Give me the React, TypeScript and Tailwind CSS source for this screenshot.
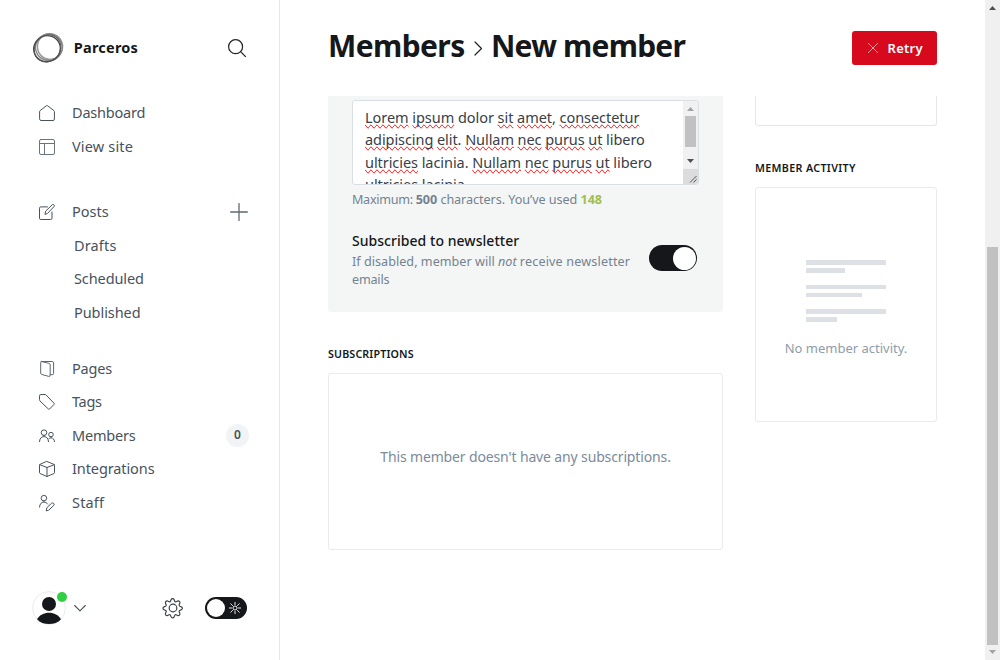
import type { ReactNode } from "react";

function Icon({ children }: { children: ReactNode }) {
  return (
    <svg viewBox="0 0 16 16" className="h-4 w-4 shrink-0 overflow-visible" fill="none" stroke="#48525c" strokeWidth="1" strokeLinecap="round" strokeLinejoin="round">
      {children}
    </svg>
  );
}

const icons = {
  home: <path d="M.6 6.6q0-.6.5-1L7.3.8q.7-.5 1.4 0l6.2 4.8q.5.4.5 1v7.500q0 1.400-1.400 1.400H2Q.6 15.500.6 14.100z" />,
  site: <path stroke="#6b747d" d="M2 .5h12q1.500 0 1.500 1.500v12q0 1.500-1.500 1.500H2Q.5 15.500.5 14V2Q.5.5 2 .5zM.5 4.500h15M5.500 4.500v11" />,
  posts: <path d="M8.500 2.900H1.800Q.5 2.900.5 4.200v9.900q0 1.400 1.300 1.400h9.900q1.300 0 1.300-1.400V8M6 10l.7-2.900L13.300.7q.8-.6 1.600.1.900.9.2 1.700L8.700 9.200z" />,
  pages: <path stroke="#5c6670" d="M2.300.5h10.900q1.400 0 1.400 1.300v10.600q0 1.300-1.400 1.300h-2.100M2.300.5 9.900 2.300q1.300.4 1.300 1.700v10.300q0 1.500-1.400 1.100L2.800 13.500q-1.100-.3-1.100-1.400V1.500q0-.8.600-1z" />,
  tags: <path d="M.5 1.800Q.5.500 1.800.500L6.700.600 15 9.200q.6.600 0 1.200L10.600 15q-.6.600-1.200 0L1 7Q.5 6.500.5 5.900z" />,
  members: <path d="M5 7.500a2.800 2.800 0 1 0 0-5.600 2.800 2.800 0 0 0 0 5.600zM.5 13.600c.2-3.200 1.800-5 4.500-5s4.300 1.800 4.500 5M12 8.900a2.300 2.300 0 1 0 0-4.600 2.300 2.300 0 0 0 0 4.600zM9.600 10.900c.6-.7 1.400-1 2.400-1 2.100 0 3.300 1.400 3.500 3.700" />,
  box: <path d="M8 .5l7 2.900q.5.300.5.800v7.500q0 .6-.5.800L8 15.500l-7-3Q.5 12.200.5 11.700V4.200q0-.5.5-.8zM.7 3.700 8 6.500l7.300-2.800M8 6.500v9" />,
  staff: <path d="M4.900 6a2.800 2.800 0 1 0 0-5.600 2.800 2.800 0 0 0 0 5.600zM.5 12.100C.7 9 2.300 7.100 4.900 7.100c1.700 0 2.900.7 3.700 1.900M7.300 15.500l.5-2.700 4.700-4.500q1.200-.8 2.200.1.900 1 .1 2L9.900 15z" />,
};

function NavItem({ icon, label, track, children }: { icon: ReactNode; label: string; track: string; children?: ReactNode }) {
  return (
    <a className="flex h-[33.5px] items-center pl-[39px] pr-[31px]">
      <Icon>{icon}</Icon>
      <span className={`ml-[17px] flex-1 pb-0.5 ${track}`}>{label}</span>
      {children}
    </a>
  );
}

function Sidebar() {
  return (
    <aside className="flex h-full w-[280px] shrink-0 flex-col border-r border-[#e5e8eb] text-[14.5px] leading-5 text-[#48525c]">
      <header className="flex items-center pl-8 pr-[33px] pt-8">
        <svg viewBox="0 0 32 32" className="h-8 w-8" fill="none">
          <ellipse cx="18" cy="14.600" rx="12.600" ry="12.800" stroke="#999" strokeWidth="1.500" />
          <ellipse cx="16.800" cy="15.300" rx="13.400" ry="13.200" stroke="#888" strokeWidth="1.400" transform="rotate(20 16.800 15.300)" />
          <ellipse cx="15" cy="16.700" rx="13.400" ry="12.900" stroke="#444" strokeWidth="1.300" transform="rotate(-25 15 16.700)" />
          <ellipse cx="15.600" cy="16.400" rx="14.200" ry="12.600" stroke="#555" strokeWidth="1" transform="rotate(-50 15.600 16.400)" />
        </svg>
        <span className="ml-[9.800px] flex-1 pb-0.5 text-[14.5px] font-bold tracking-[0.22px] text-[#15171a]">Parceros</span>
        <svg viewBox="0 0 18 18" className="h-[18px] w-[18px]" fill="none" stroke="#222" strokeWidth="1.200" strokeLinecap="round">
          <circle cx="7.600" cy="7.700" r="7" />
          <path d="M12.600 12.700l5 5" />
        </svg>
      </header>

      <nav className="mt-[32.250px] flex flex-col">
        <NavItem icon={icons.home} label="Dashboard" track="tracking-[-0.2px]" />
        <NavItem icon={icons.site} label="View site" track="tracking-[0.16px]" />
      </nav>
      <nav className="mt-8 flex flex-col">
        <NavItem icon={icons.posts} label="Posts" track="tracking-[0.02px]">
          <svg viewBox="0 0 18 18" className="h-[18px] w-[18px]" fill="none" stroke="#5f6972" strokeWidth="1.300" strokeLinecap="round">
            <path d="M9 .6v16.800M.6 9h16.800" />
          </svg>
        </NavItem>
        <a className="flex h-[33.5px] items-center pb-0.5 pl-[74px] tracking-[0.15px]">Drafts</a>
        <a className="flex h-[33.5px] items-center pb-0.5 pl-[74px] tracking-[-0.1px]">Scheduled</a>
        <a className="flex h-[33.5px] items-center pb-0.5 pl-[74px] tracking-[-0.06px]">Published</a>
      </nav>
      <nav className="mt-[22.500px] flex flex-col">
        <NavItem icon={icons.pages} label="Pages" track="tracking-[-0.18px]" />
        <NavItem icon={icons.tags} label="Tags" track="tracking-[-0.3px]" />
        <NavItem icon={icons.members} label="Members" track="tracking-[-0.2px]">
          <span className="-mr-[1px] mb-px flex h-[23px] w-[23px] items-center justify-center rounded-full bg-[#f1f3f5] text-xs font-semibold">0</span>
        </NavItem>
        <NavItem icon={icons.box} label="Integrations" track="tracking-[-0.1px]" />
        <NavItem icon={icons.staff} label="Staff" track="tracking-[0.17px]" />
      </nav>

      <footer className="mb-[35px] mt-auto flex items-center pl-8 pr-8">
        <svg viewBox="0 0 54 34" className="h-[34px] w-[54px]" fill="none">
          <circle cx="17" cy="17" r="16.400" stroke="#e5e8eb" strokeWidth=".900" />
          <circle cx="17" cy="13" r="7" fill="#15171a" />
          <path d="M5 28.200C7.500 24 12 21.800 17 21.800s9.500 2.200 12 6.400c-3 3.400-7.200 4.800-12 4.800s-9-1.400-12-4.800z" fill="#15171a" />
          <circle cx="30" cy="6" r="5" fill="#30cf43" />
          <path d="M42.700 14.500l5.300 5.300 5.300-5.300" stroke="#48525c" strokeWidth="1.100" strokeLinecap="round" strokeLinejoin="round" />
        </svg>
        <svg viewBox="0 0 24 24" className="ml-auto h-5 w-5 overflow-visible" fill="none" stroke="#394047" strokeWidth="1.400" strokeLinejoin="round">
          <path d="M13.300 1.900l.7 1.800c.2.700 1 1 1.700.8l1.900-.8c1.600-.6 3.300 1 2.600 2.600l-.8 1.900c-.3.700.1 1.400.8 1.700l1.800.7c1.600.6 1.600 2.900 0 3.500l-1.800.7c-.7.200-1 1-.8 1.700l.8 1.900c.7 1.500-1 3.200-2.600 2.500l-1.900-.8c-.7-.2-1.500.1-1.700.8l-.7 1.800c-.6 1.600-2.900 1.600-3.500 0l-.7-1.800c-.2-.700-1-1-1.700-.8l-1.900.8c-1.500.7-3.200-1-2.500-2.500l.8-1.900c.2-.700-.1-1.500-.8-1.700l-1.800-.7c-1.600-.6-1.600-2.900 0-3.500l1.800-.7c.7-.3 1-1 .8-1.700l-.8-1.900c-.7-1.600 1-3.200 2.500-2.600l1.900.8c.7.2 1.500-.1 1.700-.8l.7-1.800c.6-1.600 2.900-1.600 3.500 0z" />
          <circle cx="12" cy="12" r="4.600" />
        </svg>
        <span className="ml-[22px] flex h-[22px] w-[42px] items-center rounded-full bg-[#15171a] px-0.5">
          <span className="h-[18px] w-[18px] rounded-full bg-white" />
          <svg viewBox="0 0 12 12" className="ml-1 h-3 w-3" fill="none" stroke="#fff" strokeWidth=".900">
            <circle cx="6" cy="6" r="2" />
            <path d="M6 0v3M6 9v3M0 6h3M9 6h3M1.500 1.500l2.300 2.300M8.200 8.200l2.300 2.300M10.500 1.500 8.200 3.800M3.800 8.200l-2.300 2.300" />
          </svg>
        </span>
      </footer>
    </aside>
  );
}

function Bad({ children }: { children: ReactNode }) {
  return <span className="[text-decoration-line:spelling-error]">{children}</span>;
}

function NoteField() {
  return (
    <div className="flex h-[85px] w-[347px] overflow-hidden rounded-[3px] border border-[#dadfe3] bg-white">
      <div className="flex-1 whitespace-nowrap pl-[12px] pt-[4.500px] text-[14.5px] leading-[22.500px] text-[#394047]">
        <p className="tracking-[-0.050px]"><Bad>Lorem</Bad> <Bad>ipsum</Bad> dolor <Bad>sit</Bad> <Bad>amet</Bad>, <Bad>consectetur</Bad></p>
        <p className="tracking-[-0.070px]"><Bad>adipiscing</Bad> <Bad>elit</Bad>. <Bad>Nullam</Bad> <Bad>nec</Bad> <Bad>purus</Bad> <Bad>ut</Bad> libero</p>
        <p className="tracking-[-0.060px]"><Bad>ultricies</Bad> lacinia. <Bad>Nullam</Bad> <Bad>nec</Bad> <Bad>purus</Bad> <Bad>ut</Bad> libero</p>
        <p className="tracking-[-0.050px]"><Bad>ultricies</Bad> lacinia.</p>
      </div>
      <div className="flex w-[15px] flex-col items-center bg-[#f1f1f1]">
        <svg viewBox="0 0 15 15" className="h-[15px] w-[15px]"><path d="M4 10h7L7.500 6z" fill="#a3a3a3" /></svg>
        <div className="h-[31px] w-[11px] bg-[#c1c1c1]" />
        <svg viewBox="0 0 15 15" className="mt-[7px] h-[15px] w-[15px]"><path d="M4 5h7L7.500 9z" fill="#505050" /></svg>
        <svg viewBox="0 0 15 15" className="h-[15px] w-[15px] bg-[#dcdcdc]"><path d="M7 13.500l6.500-6.500M10.500 13.500l3-3" stroke="#555" strokeWidth="1" /></svg>
      </div>
    </div>
  );
}

function ActivityLines() {
  return (
    <div className="flex w-20 flex-col">
      <i className="h-[4.500px] w-20 bg-[#dde1e5]" />
      <i className="mt-[3.500px] h-[4.500px] w-[39px] bg-[#dde1e5]" />
      <i className="mt-[12px] h-[4.500px] w-20 bg-[#dde1e5]" />
      <i className="mt-[3.500px] h-[4.500px] w-[56px] bg-[#dde1e5]" />
      <i className="mt-[12px] h-[4.500px] w-20 bg-[#dde1e5]" />
      <i className="mt-[3.500px] h-[4.500px] w-[31px] bg-[#dde1e5]" />
    </div>
  );
}

export default function App() {
  return (
    <div className="flex h-[660px] w-[1000px] overflow-hidden bg-white font-['Noto_Sans',sans-serif] text-[#15171a]">
      <Sidebar />
      <main className="flex min-w-0 flex-1 flex-col pl-12 pr-12">
        <header className="flex h-24 shrink-0 items-start justify-between">
          <h1 className="mt-[26px] flex items-center text-[30px] font-bold leading-10">
            <span className="w-[138px] tracking-[-0.600px]">Members</span>
            <svg viewBox="0 0 9 15" className="ml-2 mt-[5px] h-[15px] w-[9px]" fill="none" stroke="#222" strokeWidth="1.200" strokeLinecap="round" strokeLinejoin="round"><path d="M1 1l6.500 6.500L1 14" /></svg>
            <span className="ml-[8px] whitespace-nowrap tracking-[-0.780px]">New member</span>
          </h1>
          <button className="mt-[31px] flex h-[34px] w-[85px] items-center rounded-[3px] bg-[#d6091d] pl-4 text-[13px] font-semibold tracking-[0.280px] text-white">
            <svg viewBox="0 0 10 10" className="mr-[9.500px] h-[10px] w-[10px]" stroke="#fff" strokeWidth=".600"><path d="M0 0l10 10M10 0L0 10" /></svg>
            <span className="pt-px">Retry</span>
          </button>
        </header>

        <div className="flex gap-8">
          <div className="w-[395px]">
            <section className="h-[216px] rounded-b-[3px] bg-[#f4f6f6] pl-6 pt-1">
              <NoteField />
              <p className="mt-[6px] whitespace-nowrap text-[12.600px] leading-[18px] tracking-[-0.050px] text-[#738291]">
                <span className="tracking-[-0.300px]">Maximum: </span><b>500</b> characters. You’ve used <b className="text-[#a0bf4f]">148</b>
              </p>
              <div className="mt-[21px] flex">
                <div className="w-[297px]">
                  <h4 className="text-[14px] font-medium leading-[22px] tracking-[0.040px]">Subscribed to newsletter</h4>
                  <p className="mt-px whitespace-nowrap text-[12.600px] leading-[18px] text-[#738291]">
                    <span className="tracking-[0.030px]">If disabled, member will </span><em className="tracking-[-0.050px]">not</em> <span className="tracking-[0.160px]">receive newsletter</span>
                    <br />
                    <span className="tracking-[-0.200px]">emails</span>
                  </p>
                </div>
                <span className="mt-[15px] flex h-[26px] w-12 items-center justify-end rounded-full bg-[#15171a] pr-[1.500px]">
                  <span className="h-[23px] w-[23px] rounded-full bg-white" />
                </span>
              </div>
            </section>
            <h4 className="mt-[34px] text-[10.700px] font-semibold leading-4 tracking-[0.150px]">SUBSCRIPTIONS</h4>
            <section className="mt-[11px] flex h-[177px] justify-center rounded-[3px] border border-[#e8eaed] pt-[73px] text-[14px] leading-5 tracking-[-0.140px] text-[#7c8b9a]">
              This member doesn't have any subscriptions.
            </section>
          </div>

          <div className="w-[182px]">
            <section className="h-[30px] rounded-b-[3px] border border-t-0 border-[#e5e8eb]" />
            <h4 className="mt-[34px] text-[10.700px] font-semibold leading-4 tracking-[0.350px]">MEMBER ACTIVITY</h4>
            <section className="mt-[11px] flex h-[235px] flex-col items-center rounded-[3px] border border-[#e8eaed] pt-[72px]">
              <ActivityLines />
              <p className="mt-[16px] text-[13px] leading-5 text-[#8e9cac]">No member activity.</p>
            </section>
          </div>
        </div>
      </main>
      <div className="flex w-[15px] shrink-0 flex-col items-center bg-[#f0f0f0]">
        <svg viewBox="0 0 15 15" className="h-[15px] w-[15px]"><path d="M4 10h7L7.500 6z" fill="#505050" /></svg>
        <div className="mt-[232px] h-[398px] w-[11px] bg-[#c1c1c1]" />
        <svg viewBox="0 0 15 15" className="h-[15px] w-[15px]"><path d="M4 5h7L7.500 9z" fill="#a3a3a3" /></svg>
      </div>
    </div>
  );
}
